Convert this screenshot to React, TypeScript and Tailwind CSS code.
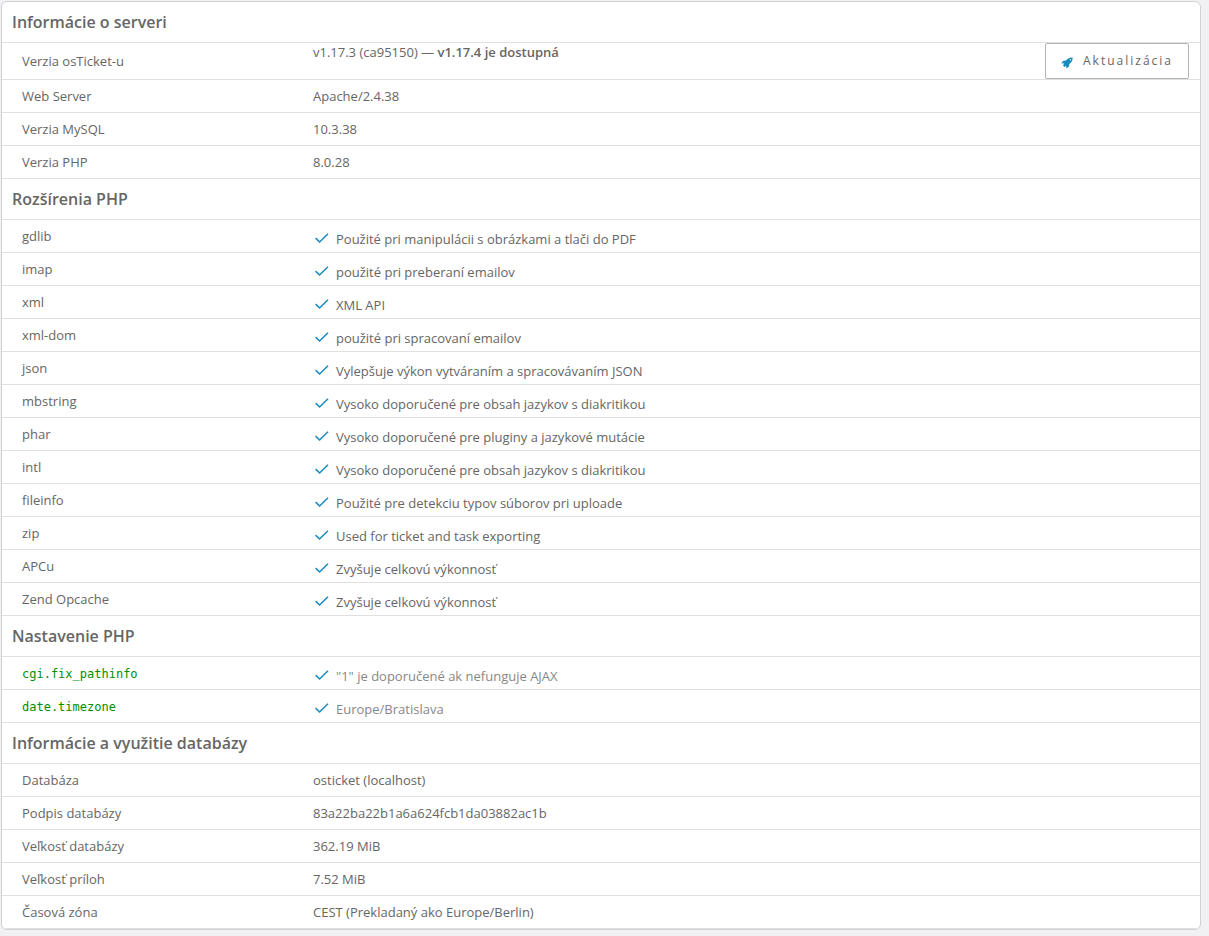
import React from 'react';

interface Row {
  label: string;
  value: string;
}

const SERVER: Row[] = [
  { label: 'Web Server', value: 'Apache/2.4.38' },
  { label: 'Verzia MySQL', value: '10.3.38' },
  { label: 'Verzia PHP', value: '8.0.28' },
];

const EXTENSIONS: Row[] = [
  { label: 'gdlib', value: 'Použité pri manipulácii s obrázkami a tlači do PDF' },
  { label: 'imap', value: 'použité pri preberaní emailov' },
  { label: 'xml', value: 'XML API' },
  { label: 'xml-dom', value: 'použité pri spracovaní emailov' },
  { label: 'json', value: 'Vylepšuje výkon vytváraním a spracovávaním JSON' },
  { label: 'mbstring', value: 'Vysoko doporučené pre obsah jazykov s diakritikou' },
  { label: 'phar', value: 'Vysoko doporučené pre pluginy a jazykové mutácie' },
  { label: 'intl', value: 'Vysoko doporučené pre obsah jazykov s diakritikou' },
  { label: 'fileinfo', value: 'Použité pre detekciu typov súborov pri uploade' },
  { label: 'zip', value: 'Used for ticket and task exporting' },
  { label: 'APCu', value: 'Zvyšuje celkovú výkonnosť' },
  { label: 'Zend Opcache', value: 'Zvyšuje celkovú výkonnosť' },
];

const SETTINGS: Row[] = [
  { label: 'cgi.fix_pathinfo', value: '"1" je doporučené ak nefunguje AJAX' },
  { label: 'date.timezone', value: 'Europe/Bratislava' },
];

const DATABASE: Row[] = [
  { label: 'Databáza', value: 'osticket (localhost)' },
  { label: 'Podpis databázy', value: '83a22ba22b1a6a624fcb1da03882ac1b' },
  { label: 'Veľkosť databázy', value: '362.19 MiB' },
  { label: 'Veľkosť príloh', value: '7.52 MiB' },
  { label: 'Časová zóna', value: 'CEST (Prekladaný ako Europe/Berlin)' },
];

const CheckIcon = () => (
  <svg className="mb-0.5 h-3 w-4 shrink-0" viewBox="0 0 16 12" fill="none" stroke="#1a8dc0" strokeWidth="1.6" aria-hidden="true">
    <path d="M1.6 6.2 L5.6 10 L14 1.8" />
  </svg>
);

const RocketIcon = () => (
  <svg className="mt-1 h-3 w-3 shrink-0" viewBox="0 0 12 12" fill="#128dbe" aria-hidden="true">
    <path
      fillRule="evenodd"
      d="M11.6 .5 C8.6 .4 6.6 1.4 5 3.5 L2.6 3.8 Q2.3 3.9 2.1 4.1 L.2 6.4 L3.4 6.3 L2 8.4 L3.6 10 L5.3 8.8 L5.2 11.4 L7.8 9.8 Q8.1 9.6 8.1 9.2 L8.3 7 C10.7 5.3 11.8 3.5 11.6 .5 Z M9.4 2 A.7 .7 0 1 1 9.4 3.4 A.7 .7 0 1 1 9.4 2 Z"
    />
  </svg>
);

const SectionHead = ({ title }: { title: string }) => (
  <tr>
    <th colSpan={2} scope="colgroup" className="h-[41px] border-b border-[#e0e0e0] px-2.5 text-left text-base font-semibold">
      {title}
    </th>
  </tr>
);

const PlainRow = ({ label, value }: Row) => (
  <tr>
    <th scope="row" className="h-[33px] border-b border-[#e0e0e0] pl-5 text-left font-normal">
      {label}
    </th>
    <td className="border-b border-[#e0e0e0] pl-2">{value}</td>
  </tr>
);

const CheckRow = ({ label, value, setting }: Row & { setting?: boolean }) => (
  <tr>
    <th scope="row" className="h-[33px] border-b border-[#e0e0e0] pl-5 text-left font-normal">
      {setting ? (
        <code className="font-['DejaVu_Sans_Mono',monospace] text-xs text-[#008f00]">{label}</code>
      ) : (
        label
      )}
    </th>
    <td className="border-b border-[#e0e0e0] pl-[9px]">
      <div className={`flex items-center gap-1.5 pt-1.5 ${setting ? 'text-[#888888]' : ''}`}>
        <CheckIcon />
        <span>{value}</span>
      </div>
    </td>
  </tr>
);

export default function App() {
  return (
    <main className="min-h-screen bg-[#f1f1f3] pt-px pr-2 pb-1.5 pl-px font-['Open_Sans',sans-serif] text-[13px] leading-[18px] text-[#666666]">
      <div className="overflow-hidden rounded-md border border-[#cdd2d4] bg-white">
        <table className="w-full table-fixed border-separate border-spacing-0">
          <colgroup>
            <col className="w-[303px]" />
            <col />
          </colgroup>
          <tbody>
            <SectionHead title="Informácie o serveri" />
            <tr>
              <th scope="row" className="h-[37px] border-b border-[#e0e0e0] pl-5 text-left font-normal">
                Verzia osTicket-u
              </th>
              <td className="border-b border-[#e0e0e0] pr-[11px] pl-2">
                <div className="flex items-start justify-between">
                  <span>
                    v1.17.3 (ca95150) — <strong className="font-semibold">v1.17.4 je dostupná</strong>
                  </span>
                  <button
                    type="button"
                    className="flex h-9 items-center gap-2.5 rounded-xs border border-[#b3b3b3] bg-white px-[15px] text-xs tracking-[2px]"
                  >
                    <RocketIcon />
                    Aktualizácia
                  </button>
                </div>
              </td>
            </tr>
            {SERVER.map(row => (
              <PlainRow key={row.label} {...row} />
            ))}
          </tbody>
          <tbody>
            <SectionHead title="Rozšírenia PHP" />
            {EXTENSIONS.map(row => (
              <CheckRow key={row.label} {...row} />
            ))}
          </tbody>
          <tbody>
            <SectionHead title="Nastavenie PHP" />
            {SETTINGS.map(row => (
              <CheckRow key={row.label} {...row} setting />
            ))}
          </tbody>
          <tbody>
            <SectionHead title="Informácie a využitie databázy" />
            {DATABASE.map(row => (
              <PlainRow key={row.label} {...row} />
            ))}
          </tbody>
        </table>
      </div>
    </main>
  );
}
